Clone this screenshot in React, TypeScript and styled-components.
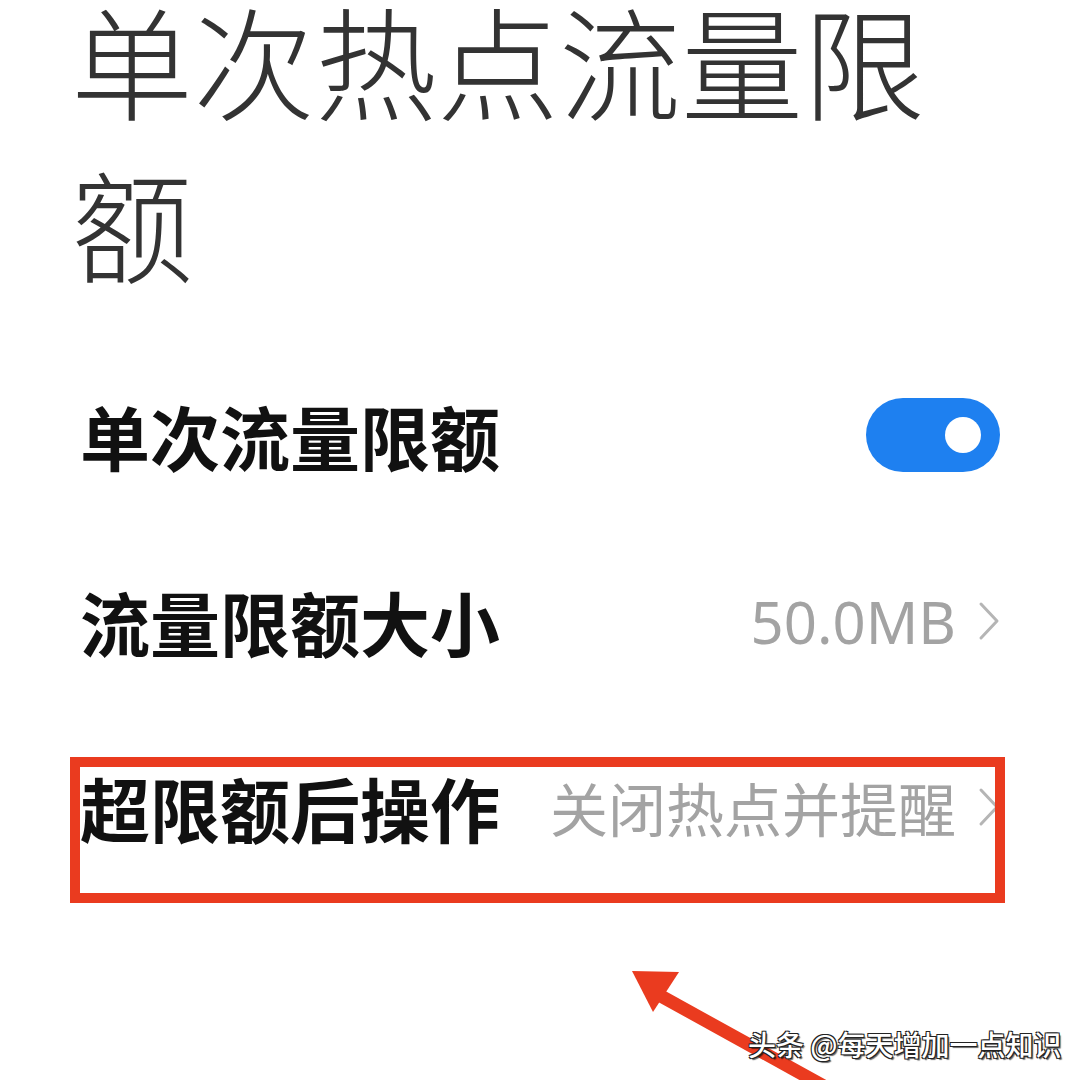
import React from 'react';
import styled, { createGlobalStyle } from 'styled-components';

const GlobalStyle = createGlobalStyle`
    html, body {
        margin: 0;
        padding: 0;
        background: #fff;
    }
    * {
        box-sizing: border-box;
    }
`;

const Page = styled.div`
    position: relative;
    width: 1080px;
    height: 1080px;
    overflow: hidden;
    background: #fff;
    padding-left: 80px;
    font-family: "Noto Sans CJK SC", "Noto Sans", sans-serif;
`;

const Title = styled.h1`
    margin: -24px 0 0 -9px;
    width: 900px;
    font-size: 122px;
    font-weight: 300;
    line-height: 163px;
    color: #333;
`;

const List = styled.div`
    margin-top: 40px;
    display: flex;
    flex-direction: column;
`;

const Row = styled.div`
    height: 186px;
    display: flex;
    align-items: center;
    justify-content: space-between;
    padding-right: 80px;
`;

const Label = styled.span`
    font-size: 70px;
    font-weight: 700;
    color: #111;
    white-space: nowrap;
`;

const Value = styled.span<{ latin?: boolean }>`
    display: flex;
    align-items: center;
    gap: 22px;
    font-family: ${props => props.latin ? '"Noto Sans", "Noto Sans CJK SC", sans-serif' : '"Noto Sans CJK SC", sans-serif'};
    font-size: 58px;
    font-weight: 400;
    color: #a3a3a3;
    white-space: nowrap;
`;

const Chevron = () => (
    <svg width="22" height="40" viewBox="0 0 22 40" fill="none">
        <path d="M3 3 L19 20 L3 37" stroke="#b5b5b5" strokeWidth="3" strokeLinecap="round" strokeLinejoin="round" />
    </svg>
);

const Switch = styled.div<{ on: boolean }>`
    position: relative;
    width: 134px;
    height: 74px;
    border-radius: 37px;
    background: ${props => props.on ? '#1e80f0' : '#d9d9d9'};
    &::after {
        content: '';
        position: absolute;
        top: 19px;
        right: 19px;
        width: 36px;
        height: 36px;
        border-radius: 50%;
        background: #fff;
    }
`;

// red highlight frame drawn over the last row
const Highlight = styled.div`
    position: absolute;
    left: 70px;
    top: 757px;
    width: 935px;
    height: 146px;
    border: 10px solid #ea3b1f;
`;

const ArrowLayer = styled.svg`
    position: absolute;
    left: 0;
    top: 0;
    pointer-events: none;
`;

const Watermark = styled.div`
    position: absolute;
    left: 748px;
    top: 1024px;
    font-family: "Noto Sans CJK SC", sans-serif;
    font-size: 28px;
    font-weight: 500;
    color: #fff;
    white-space: nowrap;
    text-shadow: 1px 1px 0 #222, -1px -1px 0 #222, 1px -1px 0 #222, -1px 1px 0 #222, 2px 2px 1px rgba(0, 0, 0, 0.6);
`;

export default function App() {
    return (
        <>
            <GlobalStyle />
            <Page>
                <Title>单次热点流量限额</Title>
                <List>
                    <Row>
                        <Label>单次流量限额</Label>
                        <Switch on />
                    </Row>
                    <Row>
                        <Label>流量限额大小</Label>
                        <Value latin>
                            50.0MB
                            <Chevron />
                        </Value>
                    </Row>
                    <Row>
                        <Label>超限额后操作</Label>
                        <Value>
                            关闭热点并提醒
                            <Chevron />
                        </Value>
                    </Row>
                </List>
                <Highlight />
                <ArrowLayer width="1080" height="1080" viewBox="0 0 1080 1080">
                    <line x1="650" y1="990" x2="840" y2="1095" stroke="#ea3b1f" strokeWidth="13" />
                    <polygon points="632,971 679,972 653,1012" fill="#ea3b1f" />
                </ArrowLayer>
                <Watermark>头条 @每天增加一点知识</Watermark>
            </Page>
        </>
    );
}
